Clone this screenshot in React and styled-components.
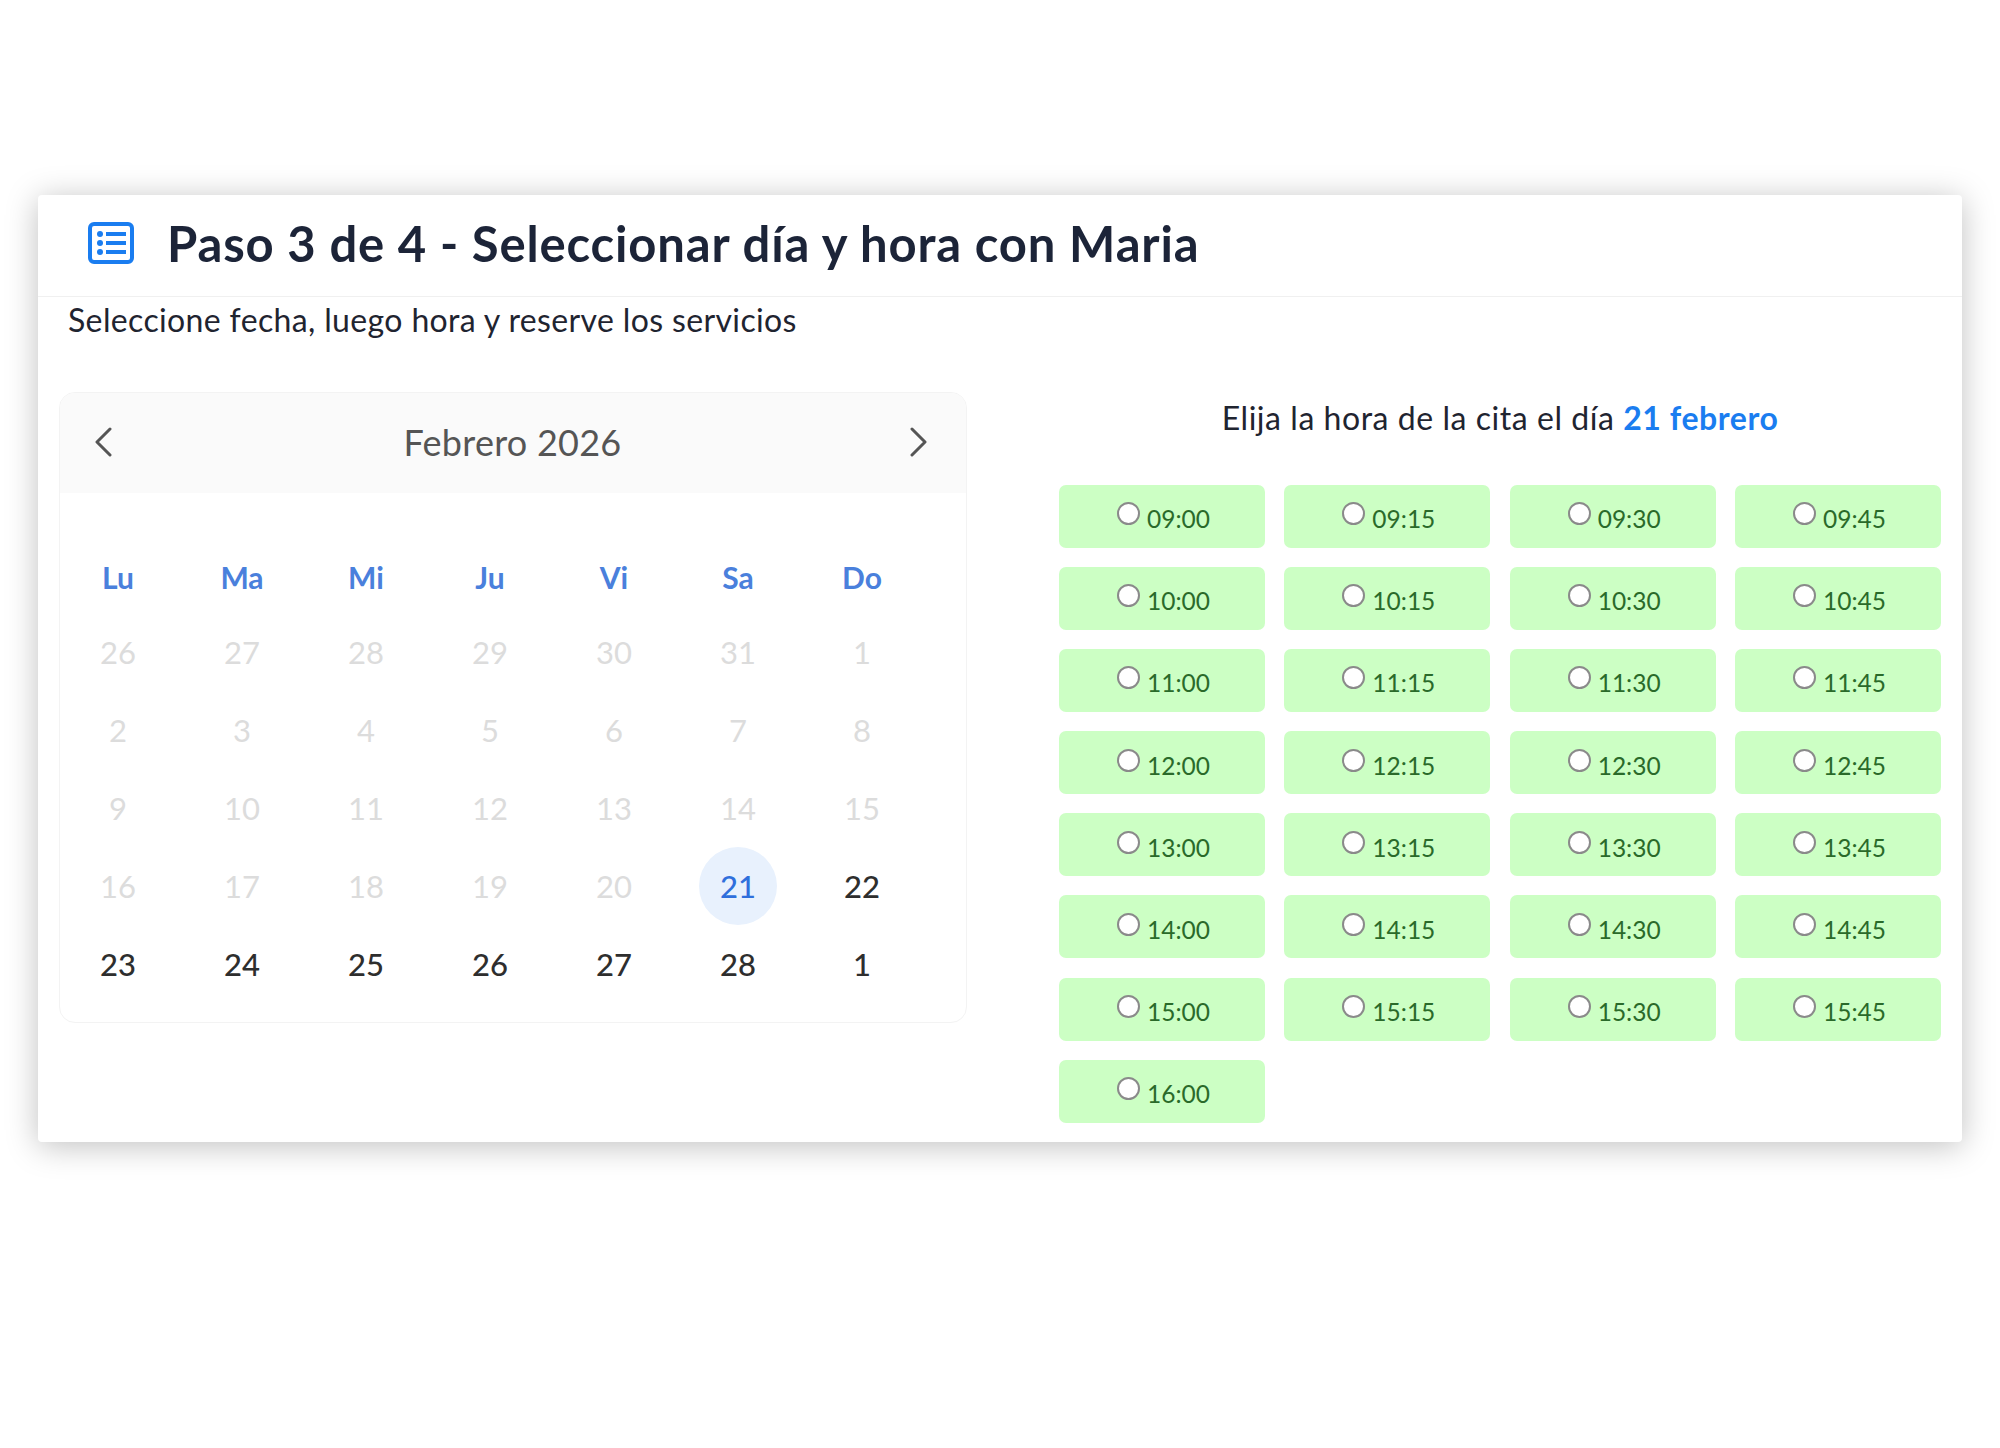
import React from 'react';
import styled, { createGlobalStyle } from 'styled-components';

const GlobalStyle = createGlobalStyle`
  html, body {
    margin: 0;
    padding: 0;
    background: #fff;
  }
  body {
    font-family: "Lato", "Open Sans", sans-serif;
  }
`;

const Page = styled.div`
  width: 2000px;
  height: 1448px;
  padding: 195px 38px 0;
  box-sizing: border-box;
`;

const Card = styled.div`
  height: 947px;
  background: #fff;
  border-radius: 4px;
  box-shadow: 0 4px 32px rgba(0, 0, 0, 0.25);
`;

const Header = styled.div`
  height: 102px;
  box-sizing: border-box;
  display: flex;
  align-items: center;
  gap: 33px;
  padding: 0 0 6px 50px;
  border-bottom: 1px solid #f0f0f0;
`;

const Title = styled.h1`
  margin: 0;
  font-size: 49px;
  font-weight: 700;
  letter-spacing: 0.86px;
  color: #1c2438;
`;

const Subtitle = styled.div`
  margin: 3px 0 0 30px;
  font-size: 32px;
  letter-spacing: 0.36px;
  line-height: 40px;
  color: #1f2430;
`;

const Columns = styled.div`
  display: flex;
  justify-content: space-between;
  padding: 52px 21px 0;
`;

const Calendar = styled.div`
  width: 908px;
  height: 631px;
  box-sizing: border-box;
  border: 1px solid #f3f3f3;
  border-radius: 16px;
  overflow: hidden;
`;

const CalendarHead = styled.div`
  height: 100px;
  box-sizing: border-box;
  background: #fafafa;
  display: flex;
  align-items: center;
  justify-content: space-between;
  padding: 0 38px 2px 34px;
  font-size: 36px;
  letter-spacing: 0.25px;
  color: #555;
`;

const MonthName = styled.span`
  margin-left: 3px;
`;

const DayGrid = styled.div`
  display: grid;
  grid-template-columns: repeat(7, 124px);
  grid-auto-rows: 78px;
  margin: 42px 0 0 -4px;
  justify-items: center;
  align-items: center;
`;

const WeekDay = styled.div`
  padding-top: 6px;
  font-size: 30px;
  font-weight: 700;
  color: #4a80dc;
`;

const Day = styled.div`
  width: 78px;
  height: 78px;
  border-radius: 50%;
  display: flex;
  align-items: center;
  justify-content: center;
  font-size: 31px;
  font-weight: ${(p) => (p.$off ? 400 : 500)};
  color: ${(p) => (p.$selected ? '#2f6fdc' : p.$off ? '#dcdcdc' : '#2e2e2e')};
  background: ${(p) => (p.$selected ? '#e8f1fd' : 'transparent')};
`;

const SlotsColumn = styled.div`
  width: 882px;
`;

const SlotsTitle = styled.div`
  text-align: center;
  font-size: 32px;
  letter-spacing: 0.55px;
  line-height: 40px;
  color: #1f2430;
  margin-top: 6px;

  b {
    font-weight: 700;
    color: #1a7df0;
  }
`;

const SlotGrid = styled.div`
  display: grid;
  grid-template-columns: repeat(4, 206px);
  justify-content: space-between;
  grid-auto-rows: 63px;
  row-gap: 19.2px;
  margin-top: 46.5px;
`;

const Slot = styled.label`
  background: #ccffc4;
  border-radius: 7px;
  display: flex;
  align-items: center;
  justify-content: center;
  gap: 7px;
  padding-left: 3px;
  font-size: 24.5px;
  color: #2a6a2a;
`;

const Radio = styled.input`
  appearance: none;
  width: 23px;
  height: 23px;
  margin: 0 0 5px;
  box-sizing: border-box;
  background: #fff;
  border: 2px solid #8a8a8a;
  border-radius: 50%;
`;

const SlotLabel = styled.span`
  padding-top: 5px;
`;

function ListIcon() {
  return (
    <svg width="46" height="42" viewBox="0 0 46 42" fill="none">
      <rect x="2" y="2" width="42" height="38" rx="4" stroke="#1a7df0" strokeWidth="4" />
      <g fill="#1a7df0">
        <circle cx="12" cy="12" r="3" />
        <circle cx="12" cy="21" r="3" />
        <circle cx="12" cy="30" r="3" />
        <rect x="18" y="10" width="20" height="4" />
        <rect x="18" y="19" width="20" height="4" />
        <rect x="18" y="28" width="20" height="4" />
      </g>
    </svg>
  );
}

function Chevron({ flip }) {
  return (
    <svg width="19" height="30" viewBox="0 0 19 30" fill="none">
      <path
        d={flip ? 'M3 2 L16 15 L3 28' : 'M16 2 L3 15 L16 28'}
        stroke="#555"
        strokeWidth="3"
        strokeLinecap="round"
        strokeLinejoin="round"
      />
    </svg>
  );
}

const weekDays = ['Lu', 'Ma', 'Mi', 'Ju', 'Vi', 'Sa', 'Do'];

const days = [
  26, 27, 28, 29, 30, 31, 1,
  2, 3, 4, 5, 6, 7, 8,
  9, 10, 11, 12, 13, 14, 15,
  16, 17, 18, 19, 20, 21, 22,
  23, 24, 25, 26, 27, 28, 1,
];

const times = [];
for (let h = 9; h <= 15; h++) {
  ['00', '15', '30', '45'].forEach((m) => times.push(`${String(h).padStart(2, '0')}:${m}`));
}
times.push('16:00');

export default function App() {
  return (
    <Page>
      <GlobalStyle />
      <Card>
        <Header>
          <ListIcon />
          <Title>Paso 3 de 4 - Seleccionar día y hora con Maria</Title>
        </Header>
        <Subtitle>Seleccione fecha, luego hora y reserve los servicios</Subtitle>
        <Columns>
          <Calendar>
            <CalendarHead>
              <Chevron />
              <MonthName>Febrero 2026</MonthName>
              <Chevron flip />
            </CalendarHead>
            <DayGrid>
              {weekDays.map((d) => (
                <WeekDay key={d}>{d}</WeekDay>
              ))}
              {days.map((d, i) => (
                <Day key={i} $off={i < 26} $selected={i === 26}>
                  {d}
                </Day>
              ))}
            </DayGrid>
          </Calendar>
          <SlotsColumn>
            <SlotsTitle>
              Elija la hora de la cita el día <b>21 febrero</b>
            </SlotsTitle>
            <SlotGrid>
              {times.map((t) => (
                <Slot key={t}>
                  <Radio type="radio" name="hora" />
                  <SlotLabel>{t}</SlotLabel>
                </Slot>
              ))}
            </SlotGrid>
          </SlotsColumn>
        </Columns>
      </Card>
    </Page>
  );
}
